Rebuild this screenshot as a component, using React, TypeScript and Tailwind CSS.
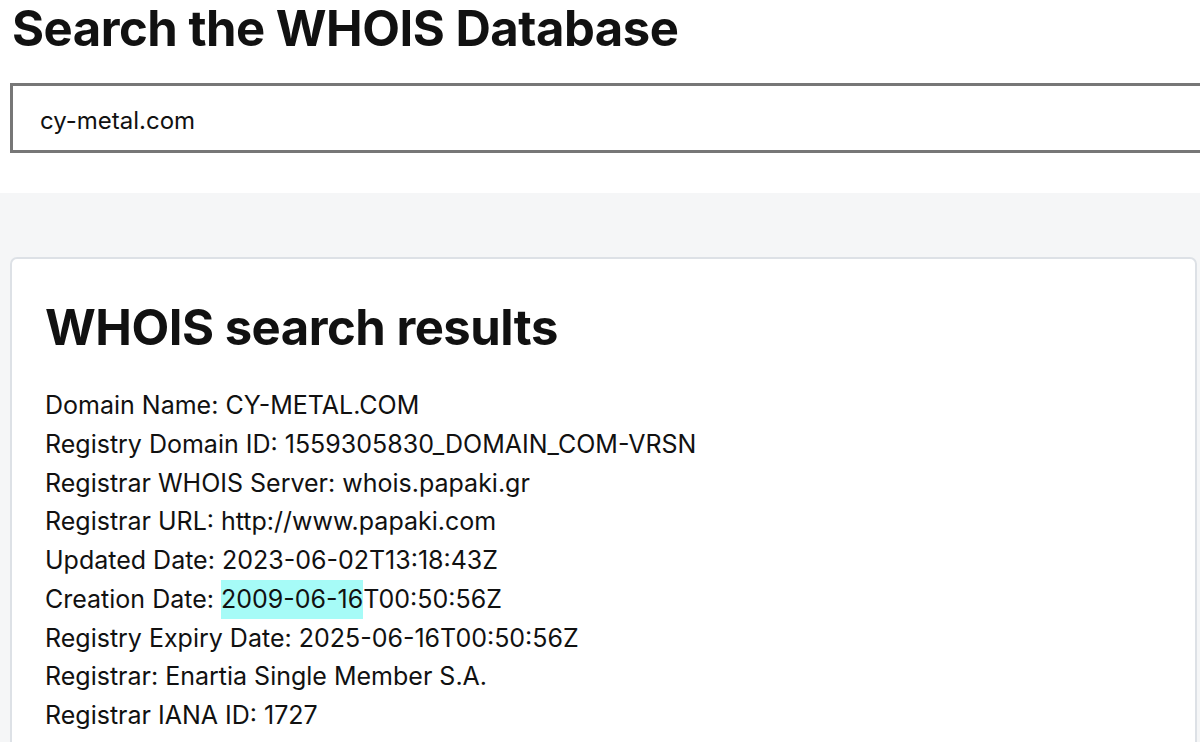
import React from "react";

const lines: React.ReactNode[] = [
  "Domain Name: CY-METAL.COM",
  "Registry Domain ID: 1559305830_DOMAIN_COM-VRSN",
  "Registrar WHOIS Server: whois.papaki.gr",
  "Registrar URL: http://www.papaki.com",
  "Updated Date: 2023-06-02T13:18:43Z",
  <>
    Creation Date: <span className="inline-block bg-[#a6fbf7]">2009-06-16</span>T00:50:56Z
  </>,
  "Registry Expiry Date: 2025-06-16T00:50:56Z",
  "Registrar: Enartia Single Member S.A.",
  "Registrar IANA ID: 1727",
];

export default function App() {
  return (
    <div
      className="w-[1200px] h-[742px] overflow-hidden bg-white text-[#111]"
      style={{ fontFamily: "Inter, 'Noto Sans', sans-serif" }}
    >
      <div className="pl-[12px] pt-[0px]">
        <h1 className="text-[49px] font-bold leading-[58px] tracking-[-0.5px]">
          Search the WHOIS Database
        </h1>
      </div>
      <div className="pl-[10px] pt-[25px]">
        <div className="h-[70px] w-[1210px] border-[3px] border-[#777] bg-white flex items-center pl-[27px] pt-[6px] text-[24px]">
          cy-metal.com
        </div>
      </div>
      <div className="mt-[40px] bg-[#f5f6f7] pt-[64px] pl-[10px] pr-[3px] h-[600px]">
        <div className="bg-white border-[2px] border-[#dde1e6] rounded-[7px] pl-[33px] pt-[37px] h-[600px]">
          <h2 className="text-[49px] font-bold leading-[64px] tracking-[-0.5px]">
            WHOIS search results
          </h2>
          <div className="mt-[26px] text-[25px] leading-[38.75px]">
            {lines.map((l, i) => (
              <div key={i}>{l}</div>
            ))}
          </div>
        </div>
      </div>
    </div>
  );
}
